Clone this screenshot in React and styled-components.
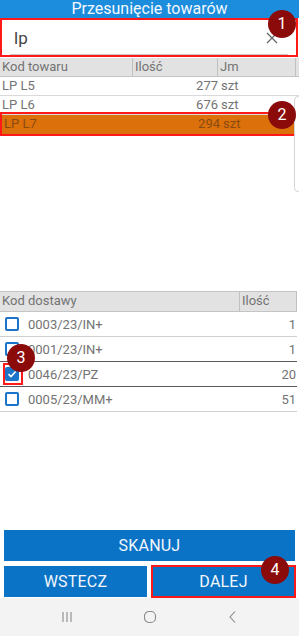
import React from 'react';
import styled, { createGlobalStyle } from 'styled-components';

const GlobalStyle = createGlobalStyle`
  html, body {
    margin: 0;
    padding: 0;
    background: #ffffff;
  }
  body {
    font-family: Roboto, "Noto Sans", Arial, sans-serif;
  }
`;

const Page = styled.div`
  width: 299px;
  height: 636px;
  display: flex;
  flex-direction: column;
  overflow: hidden;
  background: #ffffff;
  position: relative;
`;

const TitleBar = styled.div`
  height: 18px;
  background: #1b8ddc;
  color: #f4f8fc;
  font-size: 16px;
  line-height: 18px;
  text-align: center;
`;

const Marked = styled.div`
  position: relative;
  border: 2px solid #ff1a1a;
  box-sizing: border-box;
`;

const SearchBox = styled(Marked)`
  height: 39px;
  margin: 0 1px 1px 0;
  padding: 0 8px;
  display: flex;
  align-items: center;
`;

const SearchField = styled.div`
  flex: 1;
  height: 33px;
  border-bottom: 1px solid #c8c8c8;
  display: flex;
  align-items: center;
  padding: 0 10px 0 4px;
  box-sizing: border-box;
  margin-top: 1px;
`;

const SearchText = styled.span`
  flex: 1;
  font-size: 17px;
  color: #444444;
`;

const ClearIcon = styled.svg`
  width: 12px;
  height: 12px;
`;

const Badge = styled.div`
  position: absolute;
  width: 28px;
  height: 28px;
  border-radius: 50%;
  background: #8b0a0a;
  color: #ffffff;
  font-size: 16px;
  line-height: 28px;
  text-align: center;
  z-index: 2;
`;

const ProductArea = styled.div`
  height: 233px;
  position: relative;
`;

const ProductHeader = styled.div`
  display: grid;
  grid-template-columns: 133px 85px 78px;
  height: 19px;
  background: #e2e2e2;
  border-bottom: 1px solid #c4c4c4;
  box-sizing: border-box;
`;

const HeadCell = styled.div`
  font-size: 13px;
  line-height: 18px;
  color: #737373;
  padding-left: 2px;
  border-right: 1px solid #c0c0c0;
  white-space: nowrap;
  overflow: hidden;
`;

const ProductRow = styled.div`
  display: grid;
  grid-template-columns: 133px 85px 78px;
  height: 18px;
  font-size: 13px;
  line-height: 18px;
  color: ${p => (p.$active ? '#8a4b12' : '#737373')};
  background: ${p => (p.$active ? '#dc700b' : '#ffffff')};
  border-bottom: 1px solid ${p => (p.$active ? '#dc700b' : '#dadada')};
`;

const ActiveRow = styled(Marked)`
  margin-top: -3px;
  padding-top: 1px;
  margin-right: 2px;
`;

const Cell = styled.div`
  padding-left: ${p => (p.$right ? '0' : '2px')};
  text-align: ${p => (p.$right ? 'right' : 'left')};
  white-space: nowrap;
`;

const UnitCell = styled.div`
  padding-left: 3px;
`;

const ScrollThumb = styled.div`
  position: absolute;
  right: -3px;
  top: 38px;
  width: 6px;
  height: 94px;
  border: 1px solid #d4d4d4;
  border-radius: 4px;
  background: #ffffff;
`;

const DeliveryTable = styled.div`
  margin-right: 2px;
`;

const DeliveryHeader = styled.div`
  display: grid;
  grid-template-columns: 240px 57px;
  height: 19px;
  background: #e2e2e2;
  border-top: 1px solid #c4c4c4;
  border-bottom: 1px solid #c4c4c4;
`;

const DeliveryRow = styled.div`
  position: relative;
  display: grid;
  grid-template-columns: 28px 1fr 60px;
  align-items: center;
  height: 24px;
  font-size: 13px;
  color: #737373;
  border-bottom: 1px solid ${p => (p.$dark ? '#5a5a5a' : '#cfcfcf')};
`;

const CheckWrap = styled.div`
  position: relative;
  height: 24px;
  display: flex;
  align-items: center;
  padding-left: 5px;
`;

const CheckBox = styled.div`
  width: 14px;
  height: 14px;
  box-sizing: border-box;
  border: 2px solid #1b74c9;
  border-radius: 2px;
  background: ${p => (p.$checked ? '#1b74c9' : '#ffffff')};
  display: flex;
  align-items: center;
  justify-content: center;
`;

const CheckMark = styled(Marked)`
  position: absolute;
  left: 3px;
  top: 1px;
  width: 20px;
  height: 22px;
`;

const Qty = styled.div`
  text-align: right;
  padding-right: 1px;
`;

const Filler = styled.div`
  flex: 1;
`;

const ButtonArea = styled.div`
  display: flex;
  flex-direction: column;
  gap: 5px;
  padding: 0 4px 1px 4px;
`;

const ButtonRow = styled.div`
  display: grid;
  grid-template-columns: 143px 1fr;
  gap: 5px;
`;

const Button = styled.div`
  height: 31px;
  background: #0b73c6;
  color: #f2f6fb;
  font-size: 16px;
  line-height: 31px;
  text-align: center;
  letter-spacing: 0.2px;
`;

const MarkedButton = styled(Marked)`
  margin: -1px;
  background: #0b73c6;
  height: 33px;
  color: #f2f6fb;
  font-size: 16px;
  line-height: 29px;
  text-align: center;
  letter-spacing: 0.2px;
`;

const NavBar = styled.div`
  height: 38px;
  background: #f3f3f3;
  display: grid;
  grid-template-columns: 1fr 1fr 1fr;
  align-items: center;
  justify-items: center;
  padding: 0 25px;
`;

const NavIcon = styled.svg`
  width: 14px;
  height: 14px;
`;

const products = [
  { code: 'LP L5', qty: 277, unit: 'szt' },
  { code: 'LP L6', qty: 676, unit: 'szt' },
];

const deliveries = [
  { code: '0003/23/IN+', qty: 1 },
  { code: '0001/23/IN+', qty: 1 },
  { code: '0046/23/PZ', qty: 20, checked: true },
  { code: '0005/23/MM+', qty: 51 },
];

const Check = () => (
  <svg width="10" height="10" viewBox="0 0 10 10">
    <path d="M1.5 5.2 L4 7.5 L8.6 2.5" fill="none" stroke="#ffffff" strokeWidth="1.6" />
  </svg>
);

const App = () => (
  <>
    <GlobalStyle />
    <Page>
      <TitleBar>Przesunięcie towarów</TitleBar>

      <SearchBox>
        <SearchField>
          <SearchText>lp</SearchText>
          <ClearIcon viewBox="0 0 12 12">
            <path d="M1 1 L11 11 M11 1 L1 11" stroke="#666" strokeWidth="1.3" />
          </ClearIcon>
        </SearchField>
        <Badge style={{ top: -10, left: 266 }}>1</Badge>
      </SearchBox>

      <ProductArea>
        <ProductHeader>
          <HeadCell>Kod towaru</HeadCell>
          <HeadCell>Ilość</HeadCell>
          <HeadCell>Jm</HeadCell>
        </ProductHeader>
        {products.map(p => (
          <ProductRow key={p.code}>
            <Cell>{p.code}</Cell>
            <Cell $right>{p.qty}</Cell>
            <UnitCell>{p.unit}</UnitCell>
          </ProductRow>
        ))}
        <ActiveRow>
          <ProductRow $active>
            <Cell>LP L7</Cell>
            <Cell $right>294</Cell>
            <UnitCell>szt</UnitCell>
          </ProductRow>
          <Badge style={{ top: -13, left: 266 }}>2</Badge>
        </ActiveRow>
        <ScrollThumb />
      </ProductArea>

      <DeliveryTable>
        <DeliveryHeader>
          <HeadCell>Kod dostawy</HeadCell>
          <HeadCell>Ilość</HeadCell>
        </DeliveryHeader>
        {deliveries.map((d, i) => (
          <DeliveryRow key={d.code} $dark={i === 1 || i === 2}>
            <CheckWrap>
              <CheckBox $checked={d.checked}>{d.checked && <Check />}</CheckBox>
              {d.checked && <CheckMark />}
            </CheckWrap>
            <div>{d.code}</div>
            <Qty>{d.qty}</Qty>
            {i === 1 && <Badge style={{ top: 7, left: 7 }}>3</Badge>}
          </DeliveryRow>
        ))}
      </DeliveryTable>

      <Filler />

      <ButtonArea>
        <Button>SKANUJ</Button>
        <ButtonRow>
          <Button>WSTECZ</Button>
          <MarkedButton>
            DALEJ
            <Badge style={{ top: -11, left: 108 }}>4</Badge>
          </MarkedButton>
        </ButtonRow>
      </ButtonArea>

      <NavBar>
        <NavIcon viewBox="0 0 14 14">
          <path d="M3 2 V12 M7 2 V12 M11 2 V12" stroke="#8a8a8a" strokeWidth="1.1" />
        </NavIcon>
        <NavIcon viewBox="0 0 14 14">
          <rect x="1.5" y="1.5" width="11" height="11" rx="4.5" fill="none" stroke="#8a8a8a" strokeWidth="1.1" />
        </NavIcon>
        <NavIcon viewBox="0 0 14 14">
          <path d="M9 1.5 L4 7 L9 12.5" fill="none" stroke="#8a8a8a" strokeWidth="1.1" />
        </NavIcon>
      </NavBar>
    </Page>
  </>
);

export default App;
